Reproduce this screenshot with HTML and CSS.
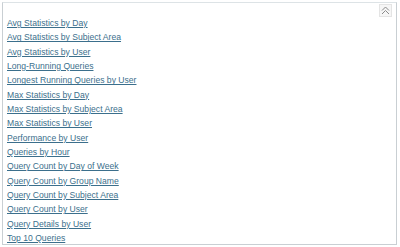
FILE: index.html
```
<!DOCTYPE html>
<html lang="en">
<head>
	<meta charset="UTF-8">
	<title>Reports</title>
	<link rel="stylesheet" href="styles.css">
</head>
<body>
	<div class="panel">
		<div class="panel-head">
			<span class="collapse">
				<svg width="9" height="9" viewBox="0 0 9 9">
					<path d="M1 4.5 L4.5 1 L8 4.5 M1 8 L4.5 4.5 L8 8" fill="none" stroke="#8a8a8a" stroke-width="1"/>
				</svg>
			</span>
		</div>
		<ul class="reports">
			<li><a href="#">Avg Statistics by Day</a></li>
			<li><a href="#">Avg Statistics by Subject Area</a></li>
			<li><a href="#">Avg Statistics by User</a></li>
			<li><a href="#">Long-Running Queries</a></li>
			<li><a href="#">Longest Running Queries by User</a></li>
			<li><a href="#">Max Statistics by Day</a></li>
			<li><a href="#">Max Statistics by Subject Area</a></li>
			<li><a href="#">Max Statistics by User</a></li>
			<li><a href="#">Performance by User</a></li>
			<li><a href="#">Queries by Hour</a></li>
			<li><a href="#">Query Count by Day of Week</a></li>
			<li><a href="#">Query Count by Group Name</a></li>
			<li><a href="#">Query Count by Subject Area</a></li>
			<li><a href="#">Query Count by User</a></li>
			<li><a href="#">Query Details by User</a></li>
			<li><a href="#">Top 10 Queries</a></li>
		</ul>
	</div>
</body>
</html>
```
FILE: styles.css
```
body{
	margin: 0;
	background: #fff;
	font-family: "Liberation Sans", Arial, sans-serif;
}
.panel{
	margin: 2px 3px 2px 2px;
	height: 243px;
	box-sizing: border-box;
	border: 1px solid #c9cfd3;
	border-top-color: #dde3e6;
}
.panel-head{
	display: flex;
	justify-content: flex-end;
	padding: 1px 4px 0 0;
	height: 12px;
}
.collapse{
	display: flex;
	align-items: center;
	justify-content: center;
	width: 11px;
	height: 11px;
	border: 1px solid #e4e4e4;
	background: #f6f6f6;
}
.reports{
	list-style: none;
	margin: 0;
	padding: 0 0 0 4px;
}
.reports li{
	height: 14.33px;
	line-height: 14px;
	font-size: 8.6px;
}
.reports a{
	color: #3b6f8c;
	text-decoration: underline;
}
```
